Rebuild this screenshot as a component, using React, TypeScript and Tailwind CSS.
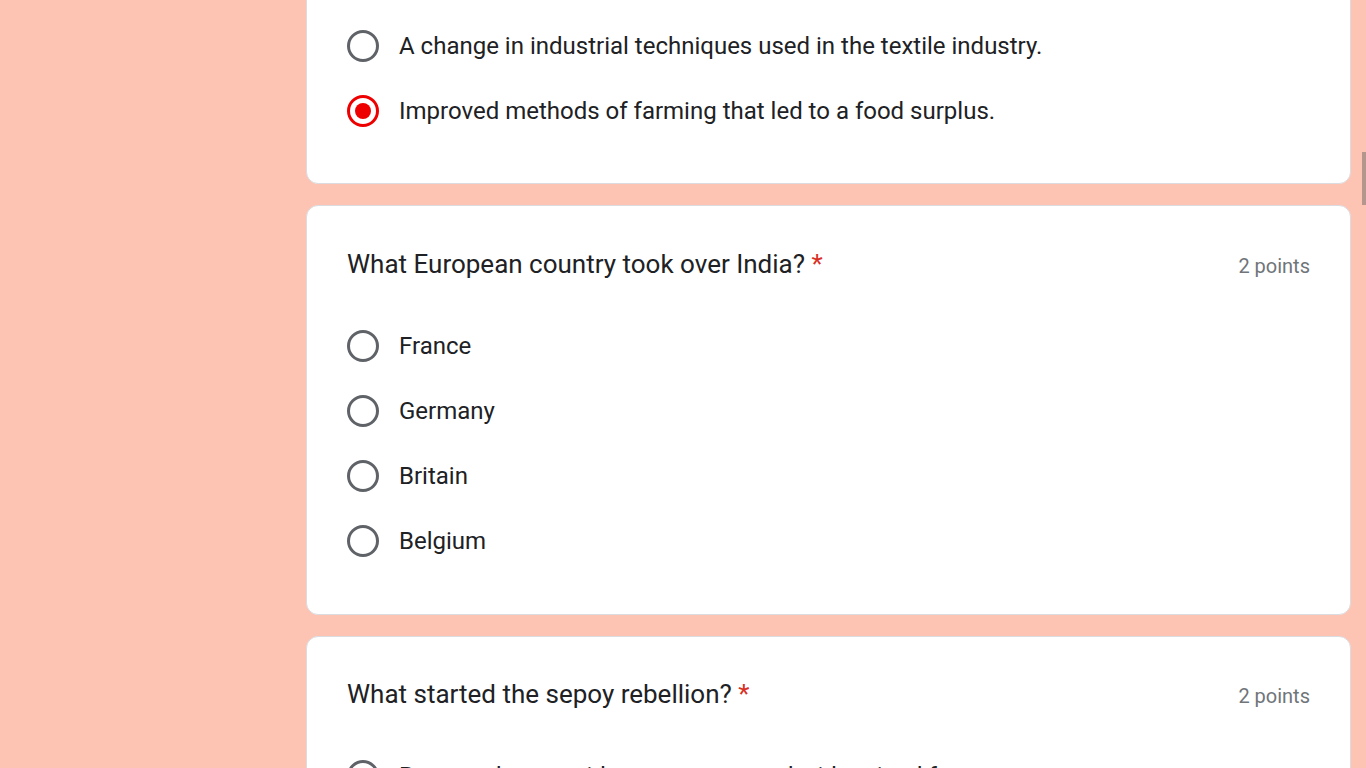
import React from 'react'

// Google Forms style quiz page, zoomed view

type Question = {
  title: string
  points: string
  options: string[]
  selected?: number
}

const questions: Question[] = [
  {
    title: 'What European country took over India?',
    points: '2 points',
    options: ['France', 'Germany', 'Britain', 'Belgium'],
  },
]

function Radio({ checked }: { checked?: boolean }) {
  if (checked) {
    return (
      <span className="flex h-[32px] w-[32px] shrink-0 items-center justify-center rounded-full border-[3px] border-[#ee0000]">
        <span className="h-[16px] w-[16px] rounded-full bg-[#ee0000]" />
      </span>
    )
  }
  return <span className="h-[32px] w-[32px] shrink-0 rounded-full border-[3px] border-[#5f6368]" />
}

function Option({ label, checked }: { label: string; checked?: boolean }) {
  return (
    <div className="flex h-[65px] items-center gap-[20px]">
      <Radio checked={checked} />
      <span className="text-[24px] text-[#202124]">{label}</span>
    </div>
  )
}

function QuestionHead({ title, points }: { title: string; points: string }) {
  return (
    <div className="flex h-[32px] items-center justify-between">
      <div className="text-[26px] text-[#202124]">
        {title} <span className="text-[#d93025]">*</span>
      </div>
      <div className="pt-[4px] text-[20px] text-[#70757a]">{points}</div>
    </div>
  )
}

export default function App() {
  return (
    <div
      className="relative h-[768px] overflow-hidden bg-[#fec4b3]"
      style={{ fontFamily: 'Roboto, "Liberation Sans", sans-serif' }}
    >
      <div className="ml-[306px] flex w-[1045px] flex-col gap-[21px]">
        {/* Previous question, partly scrolled away */}
        <div className="-mt-[30px] rounded-[12px] border border-[#dadce0] bg-white px-[40px] pb-[40px] pt-[42px]">
          <Option label="A change in industrial techniques used in the textile industry." />
          <Option label="Improved methods of farming that led to a food surplus." checked />
        </div>

        {questions.map((q) => (
          <div key={q.title} className="rounded-[12px] border border-[#dadce0] bg-white px-[40px] pb-[41px] pt-[42px]">
            <QuestionHead title={q.title} points={q.points} />
            <div className="mt-[33px]">
              {q.options.map((o, i) => (
                <Option key={o} label={o} checked={q.selected === i} />
              ))}
            </div>
          </div>
        ))}

        <div className="rounded-[12px] border border-[#dadce0] bg-white px-[40px] pb-[40px] pt-[41px]">
          <QuestionHead title="What started the sepoy rebellion?" points="2 points" />
          <div className="mt-[33px]">
            <Option label="Rumors that cartridges were greased with animal fat." />
          </div>
        </div>
      </div>

      {/* scrollbar thumb */}
      <div className="absolute right-0 top-[152px] h-[53px] w-[4px] bg-[#b4968c]" />
    </div>
  )
}
